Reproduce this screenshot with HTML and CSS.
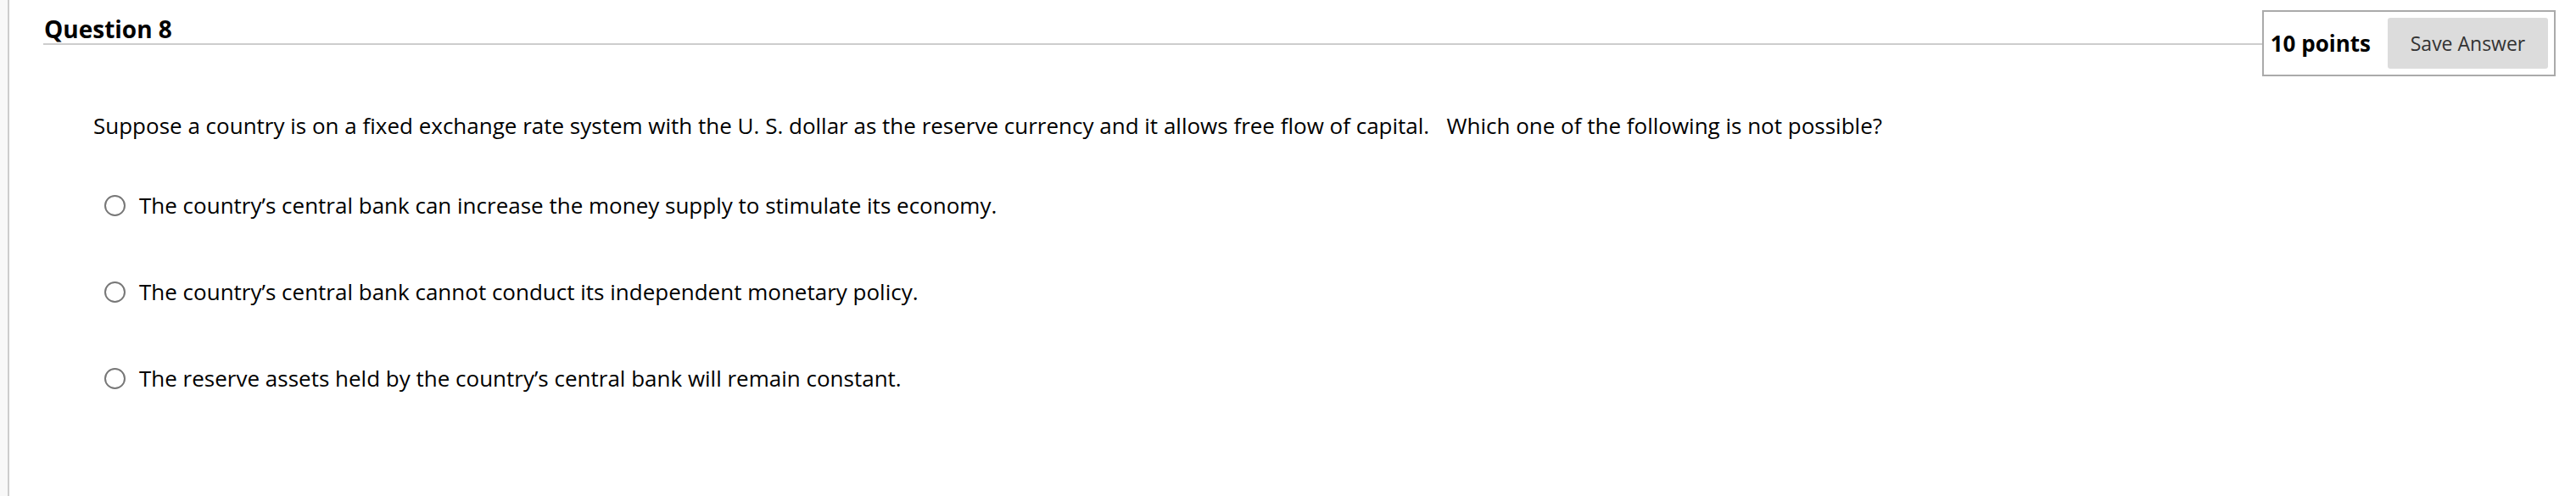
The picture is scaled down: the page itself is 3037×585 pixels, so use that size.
FILE: index.html
```html
<!DOCTYPE html>
<html lang="en">
<head>
<meta charset="utf-8">
<title>Question 8</title>
<link rel="stylesheet" href="styles.css">
</head>
<body>
<div class="page">
  <div class="rail"></div>
  <main class="question">
    <div class="q-header">
      <div class="q-title-wrap"><h2 class="q-title">Question 8</h2></div>
      <div class="points-box">
        <span class="points">10 points</span>
        <button class="save-btn" type="button">Save Answer</button>
      </div>
    </div>
    <div class="q-body">
      <p class="q-text">Suppose a country is on a fixed exchange rate system with the U. S. dollar as the reserve currency and it allows free flow of capital. &nbsp; Which one of the following is not possible?</p>
      <ul class="choices">
        <li class="choice"><span class="radio"></span><span class="choice-label">The country’s central bank can increase the money supply to stimulate its economy.</span></li>
        <li class="choice"><span class="radio"></span><span class="choice-label">The country’s central bank cannot conduct its independent monetary policy.</span></li>
        <li class="choice"><span class="radio"></span><span class="choice-label">The reserve assets held by the country’s central bank will remain constant.</span></li>
      </ul>
    </div>
  </main>
</div>
</body>
</html>
```
FILE: styles.css
```css
html, body {
  margin: 0;
  padding: 0;
  background: #ffffff;
}
body {
  font-family: "Open Sans", "Noto Sans", sans-serif;
  color: #000;
}
.page {
  display: flex;
  min-height: 585px;
}
.rail {
  width: 9px;
  flex: 0 0 9px;
  background: #f8f8f8;
  border-right: 2px solid #cdcdcd;
}
.question {
  flex: 1;
  padding-left: 40px;
}
.q-header {
  display: flex;
  align-items: flex-start;
  padding-top: 12px;
  padding-right: 24px;
}
.q-title-wrap {
  flex: 1;
  height: 39px;
  border-bottom: 2px solid #cdcdcd;
  display: flex;
  align-items: flex-end;
}
.q-title {
  margin: 0;
  font-size: 28px;
  line-height: 28px;
  font-weight: 700;
  padding-bottom: 3px;
  padding-left: 1px;
}
.points-box {
  display: flex;
  align-items: center;
  gap: 20px;
  padding: 7px;
  border: 2px solid #aaaaaa;
}
.points {
  font-weight: 700;
  font-size: 26px;
  padding-left: 1px;
}
.save-btn {
  font-family: inherit;
  font-size: 23px;
  color: #333;
  background: #dcdcdc;
  border: none;
  border-radius: 3px;
  width: 189px;
  height: 60px;
  padding: 0;
}
.q-body {
  padding-left: 59px;
}
.q-text {
  margin: 40px 0 0;
  font-size: 26px;
  line-height: 36px;
}
.choices {
  list-style: none;
  margin: 58px 0 0;
  padding: 0 0 0 13px;
  display: flex;
  flex-direction: column;
  gap: 66px;
}
.choice {
  display: flex;
  align-items: center;
  gap: 16px;
  font-size: 26px;
  line-height: 36px;
}
.radio {
  width: 21px;
  height: 21px;
  border: 2px solid #777;
  border-radius: 50%;
  flex: 0 0 auto;
}
```
